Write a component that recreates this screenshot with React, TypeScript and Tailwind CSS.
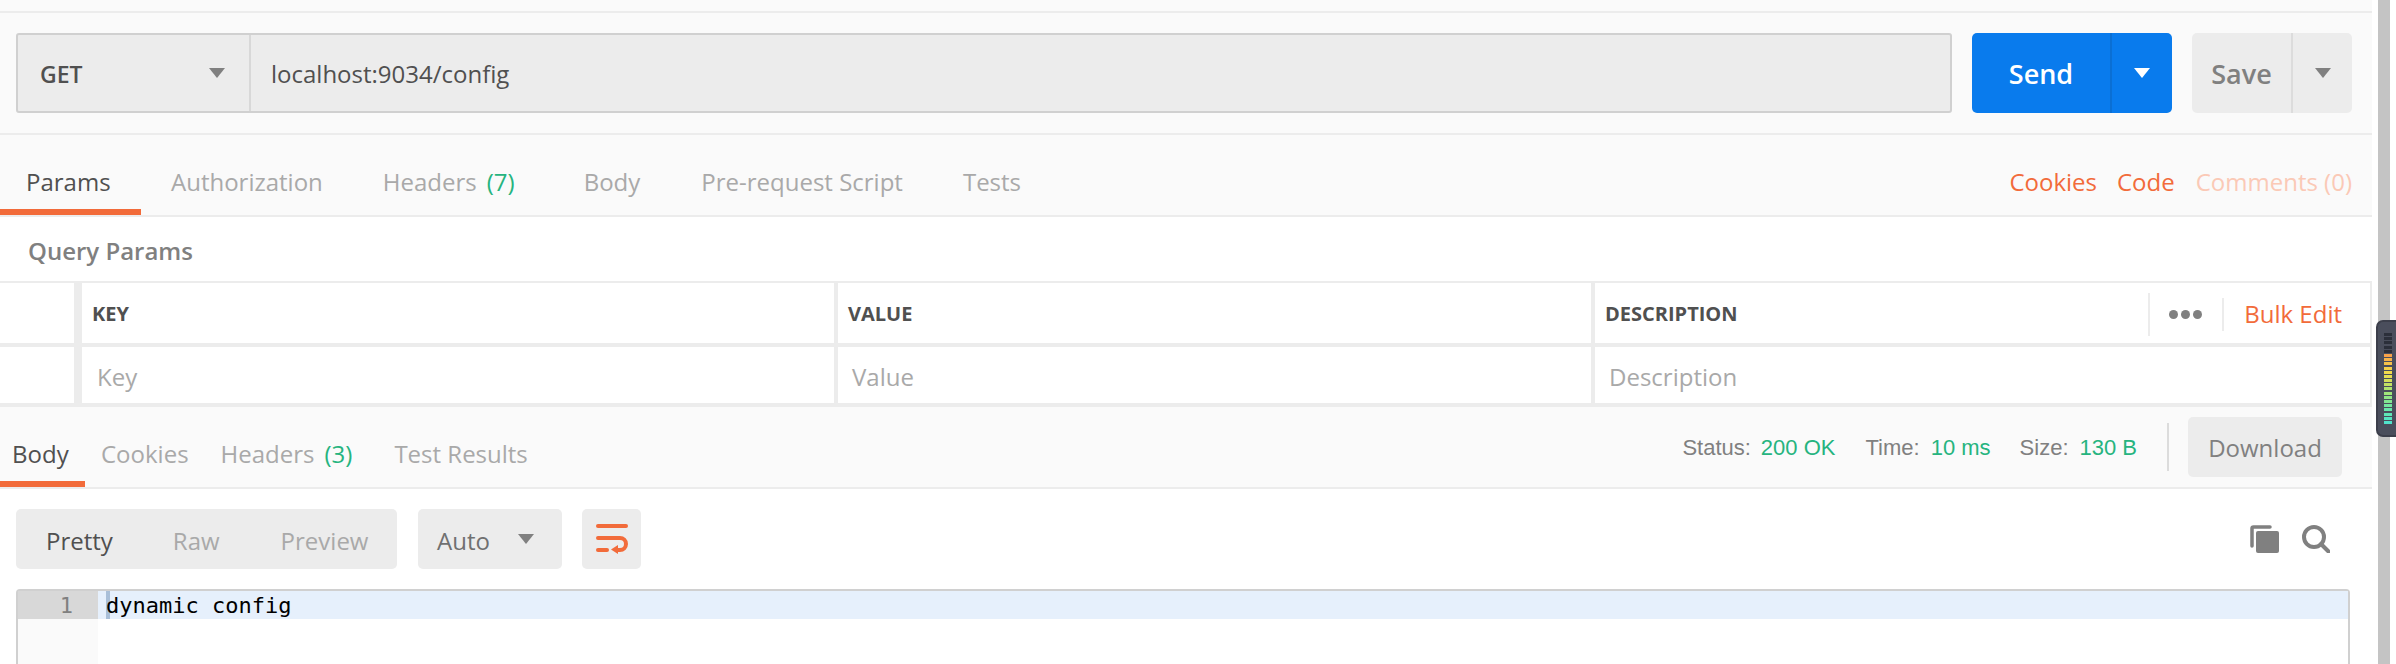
function Caret({ className }: { className: string }) {
  return (
    <svg width="16" height="10" viewBox="0 0 16 10" className={className}>
      <path d="M0 0h16L8 10z" fill="currentColor" />
    </svg>
  );
}

function CopyIcon() {
  return (
    <svg width="29" height="28" viewBox="0 0 29 28" className="text-[#808080]">
      <path d="M2 21V3.500A1.500 1.500 0 0 1 3.500 2H20" fill="none" stroke="currentColor" strokeWidth="3.500" strokeLinecap="round" />
      <rect x="6" y="6" width="23" height="22" rx="2" fill="currentColor" />
    </svg>
  );
}

function SearchIcon() {
  return (
    <svg width="28" height="28" viewBox="0 0 28 28" fill="none" stroke="#808080" strokeWidth="4">
      <circle cx="12" cy="12" r="10" />
      <path d="M19 19l7.500 7.500" strokeLinecap="round" />
    </svg>
  );
}

function WrapIcon() {
  return (
    <svg width="32" height="30" viewBox="0 0 32 30" fill="none" stroke="#f26b3a" strokeWidth="4" strokeLinecap="round">
      <path d="M2 2h28" />
      <path d="M2 14h22a6 6 0 0 1 0 12h-3" />
      <path d="M2 26h9" />
      <path d="M22 21v9l-7-4.500z" fill="#f26b3a" stroke="none" />
    </svg>
  );
}

const meterBars = [
  "#2b2f3a", "#2b2f3a", "#2b2f3a", "#2b2f3a", "#2b2f3a",
  "#f7a24a", "#f6b24a", "#f6c24a", "#f5d04a", "#f2da4c", "#e6dd52", "#d4e05a",
  "#c2e264", "#b0e46e", "#a0e67a", "#90e686", "#82e692", "#74e69e", "#68e6aa", "#5ee6b6", "#56e4c0", "#50e2ca",
];

function Meter() {
  return (
    <div className="absolute left-[2376px] top-[320px] w-[20px] h-[117px] rounded-l-[7px] bg-[#4a4e5c] border-l-2 border-y-2 border-[#3c3f4b] pt-[11px] pl-[6px]">
      <div className="h-[91px] flex flex-col justify-between">
        {meterBars.map((color, i) => (
          <div key={i} className="w-[8px] h-[3px]" style={{ backgroundColor: color }} />
        ))}
      </div>
    </div>
  );
}

function Tab({ label, count, className = "" }: { label: string; count?: string; className?: string }) {
  return (
    <div className={`h-[80px] pt-[20px] border-b-[6px] border-transparent flex items-center text-[#a9a9a9] ${className}`}>
      {label}
      {count && <span className="text-[#26b47f] ml-[10px]">{count}</span>}
    </div>
  );
}

function ActiveTab({ label, className }: { label: string; className: string }) {
  return (
    <div className={`h-[80px] pt-[20px] border-b-[6px] border-[#f26b3a] flex items-center text-[#505050] ${className}`}>
      {label}
    </div>
  );
}

function App() {
  return (
    <div className="relative w-[2396px] h-[664px] overflow-hidden bg-white flex font-['Open_Sans',sans-serif] text-[24px]">
      <div className="w-[2372px] flex flex-col shrink-0">
        <div className="h-[13px] bg-[#fafafa] border-b-2 border-[#ececec]" />

        {/* url bar */}
        <div className="h-[122px] bg-[#fafafa] border-b-2 border-[#ececec] flex pl-[16px] pt-[20px]">
          <div className="w-[1936px] h-[80px] flex rounded-[3px] border-2 border-[#d0d0d0] bg-[#ececec]">
            <div className="w-[233px] border-r-2 border-[#d8d8d8] flex items-center justify-between pl-[22px] pr-[24px]">
              <span className="text-[23px] font-semibold text-[#505050] pt-[2px]">GET</span>
              <Caret className="text-[#808080]" />
            </div>
            <div className="pl-[20px] flex items-center text-[#505050] pt-[2px]">localhost:9034/config</div>
          </div>
          <div className="ml-[20px] w-[200px] h-[80px] flex rounded-[5px] bg-[#097bed] text-white">
            <div className="w-[140px] border-r-2 border-[#0a6fd4] flex items-center justify-center text-[27px] font-semibold pt-[2px]">Send</div>
            <div className="flex-1 flex items-center justify-center">
              <Caret className="text-white" />
            </div>
          </div>
          <div className="ml-[20px] w-[160px] h-[80px] flex rounded-[5px] bg-[#ececec] text-[#808080]">
            <div className="w-[101px] border-r-2 border-[#dcdcdc] flex items-center justify-center text-[27px] font-semibold pt-[2px]">Save</div>
            <div className="flex-1 flex items-center justify-center">
              <Caret className="text-[#808080]" />
            </div>
          </div>
        </div>

        {/* request tabs */}
        <div className="h-[82px] bg-[#fafafa] border-b-2 border-[#ececec] flex">
          <ActiveTab label="Params" className="w-[141px] pl-[26px]" />
          <Tab label="Authorization" className="ml-[30px]" />
          <Tab label="Headers" count="(7)" className="ml-[60px]" />
          <Tab label="Body" className="ml-[69px]" />
          <Tab label="Pre-request Script" className="ml-[61px]" />
          <Tab label="Tests" className="ml-[60px]" />
          <div className="ml-auto pr-[20px] h-[80px] pt-[14px] flex items-center text-[#f26b3a]">
            <span>Cookies</span>
            <span className="ml-[20px]">Code</span>
            <span className="ml-[21px] text-[#fbc9b6]">Comments (0)</span>
          </div>
        </div>

        <div className="h-[64px] flex items-center pl-[28px] pt-[3px] font-semibold text-[#808080]">Query Params</div>

        {/* params table */}
        <div className="h-[126px] border-t-2 border-[#ececec] flex flex-col">
          <div className="h-[64px] flex border-b-4 border-[#ececec] text-[20px] font-bold text-[#505050]">
            <div className="w-[82px] border-r-[8px] border-[#ececec]" />
            <div className="w-[756px] pl-[10px] pt-[2px] flex items-center border-r-4 border-[#ececec]">KEY</div>
            <div className="w-[757px] pl-[10px] pt-[2px] flex items-center border-r-4 border-[#ececec]">VALUE</div>
            <div className="flex-1 flex items-center pl-[10px] pt-[2px] pr-[28px] border-r-2 border-[#ececec]">
              DESCRIPTION
              <span className="ml-auto h-[43px] border-l-2 border-[#ececec]" />
              <span className="ml-[19px] flex gap-[3px]">
                <i className="w-[9px] h-[9px] rounded-full bg-[#808080]" />
                <i className="w-[9px] h-[9px] rounded-full bg-[#808080]" />
                <i className="w-[9px] h-[9px] rounded-full bg-[#808080]" />
              </span>
              <span className="ml-[20px] h-[33px] border-l-2 border-[#ececec]" />
              <span className="ml-[20px] text-[24px] font-normal text-[#f26b3a]">Bulk Edit</span>
            </div>
          </div>
          <div className="h-[60px] flex border-b-4 border-[#ececec] text-[#a9a9a9]">
            <div className="w-[82px] border-r-[8px] border-[#ececec]" />
            <div className="w-[756px] pl-[15px] pt-[3px] flex items-center border-r-4 border-[#ececec]">Key</div>
            <div className="w-[757px] pl-[14px] pt-[3px] flex items-center border-r-4 border-[#ececec]">Value</div>
            <div className="flex-1 pl-[14px] pt-[3px] flex items-center border-r-2 border-[#ececec]">Description</div>
          </div>
        </div>

        {/* response tabs */}
        <div className="h-[82px] bg-[#fafafa] border-b-2 border-[#ececec] flex">
          <ActiveTab label="Body" className="w-[85px] pl-[12px]" />
          <Tab label="Cookies" className="ml-[16px]" />
          <Tab label="Headers" count="(3)" className="ml-[32px]" />
          <Tab label="Test Results" className="ml-[42px]" />
          <div className="ml-auto pr-[30px] h-[80px] flex items-center font-['Liberation_Sans',sans-serif] text-[22px] text-[#808080]">
            <span>Status:</span>
            <span className="ml-[10px] text-[#26b47f]">200 OK</span>
            <span className="ml-[30px]">Time:</span>
            <span className="ml-[11px] text-[#26b47f]">10 ms</span>
            <span className="ml-[29px]">Size:</span>
            <span className="ml-[11px] text-[#26b47f]">130 B</span>
            <span className="ml-[30px] h-[48px] border-l-2 border-[#dcdcdc]" />
            <span className="ml-[19px] w-[154px] h-[60px] pt-[2px] rounded-[5px] bg-[#ececec] flex items-center justify-center font-['Open_Sans',sans-serif] text-[24px]">Download</span>
          </div>
        </div>

        {/* response toolbar */}
        <div className="h-[100px] flex pl-[16px] pr-[42px] pt-[20px]">
          <div className="w-[381px] h-[60px] rounded-[5px] bg-[#ececec] flex items-center pl-[30px] pt-[3px] text-[#a9a9a9]">
            <span className="text-[#505050]">Pretty</span>
            <span className="ml-[60px]">Raw</span>
            <span className="ml-[61px]">Preview</span>
          </div>
          <div className="ml-[21px] w-[144px] h-[60px] rounded-[5px] bg-[#ececec] flex items-center justify-between pl-[19px] pr-[28px] text-[#707070]">
            <span className="pt-[3px]">Auto</span>
            <Caret className="text-[#808080]" />
          </div>
          <div className="ml-[20px] w-[59px] h-[60px] rounded-[5px] bg-[#ececec] flex items-center justify-center">
            <WrapIcon />
          </div>
          <div className="ml-auto h-[60px] flex items-center gap-[23px]">
            <CopyIcon />
            <SearchIcon />
          </div>
        </div>

        {/* editor */}
        <div className="ml-[16px] w-[2334px] h-[75px] border-2 border-b-0 border-[#d0d0d0] rounded-t-[4px] flex font-['DejaVu_Sans_Mono',monospace] text-[22px] leading-[28px]">
          <div className="w-[80px] bg-[#fafafa]">
            <div className="h-[28px] pt-[1px] bg-[#d8d8d8] text-right pr-[25px] text-[#808080]">1</div>
          </div>
          <div className="flex-1">
            <div className="h-[28px] bg-[#e6f0fc] pl-[8px] flex text-black">
              <span className="border-l-4 border-[#a9bfd8] -mr-[4px]" />
              <span className="pt-[1px]">dynamic config</span>
            </div>
          </div>
        </div>
      </div>

      {/* scrollbar */}
      <div className="ml-[6px] w-[12px] h-[664px] bg-[#c4c4c4]" />
      <Meter />
    </div>
  );
}

export default App;
